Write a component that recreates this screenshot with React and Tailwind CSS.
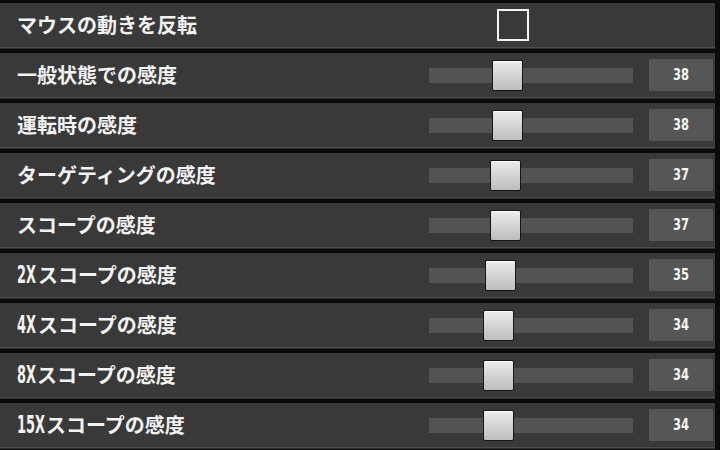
import React from "react";

const rows = [
  { label: "一般状態での感度", value: 38 },
  { label: "運転時の感度", value: 38 },
  { label: "ターゲティングの感度", value: 37 },
  { label: "スコープの感度", value: 37 },
  { prefix: "2X", pw: 21, label: "スコープの感度", value: 35 },
  { prefix: "4X", pw: 21, label: "スコープの感度", value: 34 },
  { prefix: "8X", pw: 20, label: "スコープの感度", value: 34 },
  { prefix: "15X", pw: 29, label: "スコープの感度", value: 34 },
];

const labelFont = {
  fontFamily: '"Noto Sans CJK JP", "DejaVu Sans", sans-serif',
};

function Row({ children }) {
  return (
    <div className="w-[715px] h-[46px] flex flex-col bg-[#393939] shrink-0">
      <div className="h-[44px] flex items-center">{children}</div>
      <div className="h-px bg-[#4e4e4e]" />
      <div className="h-px bg-[#2c2c2c]" />
    </div>
  );
}

function Label({ prefix, pw, text }) {
  return (
    <div className="w-[429px] pl-[17px] flex items-center text-[20px] font-bold text-[#f2f2f2] leading-none" style={labelFont}>
      {prefix && (
        <span className="inline-block overflow-visible whitespace-nowrap" style={{ width: `${pw}px` }}>
          <span className="inline-block origin-left scale-x-[0.6] text-[24px] font-bold [font-family:'DejaVu_Sans_Condensed','DejaVu_Sans',sans-serif]">
            {prefix}
          </span>
        </span>
      )}
      <span>{text}</span>
    </div>
  );
}

function Slider({ value }) {
  const left = 63 - (38 - value) * 2.25;
  return (
    <div className="relative w-[204px] h-[31px] flex items-center">
      <div className="w-full h-[15px] bg-[#535353]" />
      <div
        className="absolute top-0 w-[31px] h-[31px] rounded-[2px] border border-[#161616] bg-gradient-to-b from-[#ececec] to-[#bdbdbd] shadow-[inset_0_1px_0_#ffffff]"
        style={{ left: `${left}px` }}
      />
    </div>
  );
}

export default function App() {
  return (
    <div className="w-[720px] h-[450px] bg-[#0b0b0b] pt-[3px] flex flex-col gap-[4px] overflow-hidden">
      <Row>
        <Label text="マウスの動きを反転" />
        <div className="ml-[68px] w-[32px] h-[32px] border-2 border-[#f4f4f4]" />
      </Row>
      {rows.map((r, i) => (
        <Row key={i}>
          <Label prefix={r.prefix} pw={r.pw} text={r.label} />
          <Slider value={r.value} />
          <div className="ml-[16px] w-[64px] h-[32px] bg-[#565656] flex items-center justify-center">
            <span className="inline-block scale-x-[0.8] text-[16px] font-bold text-[#f4f4f4] [font-family:'DejaVu_Sans_Condensed','DejaVu_Sans',sans-serif]">
              {r.value}
            </span>
          </div>
        </Row>
      ))}
    </div>
  );
}
